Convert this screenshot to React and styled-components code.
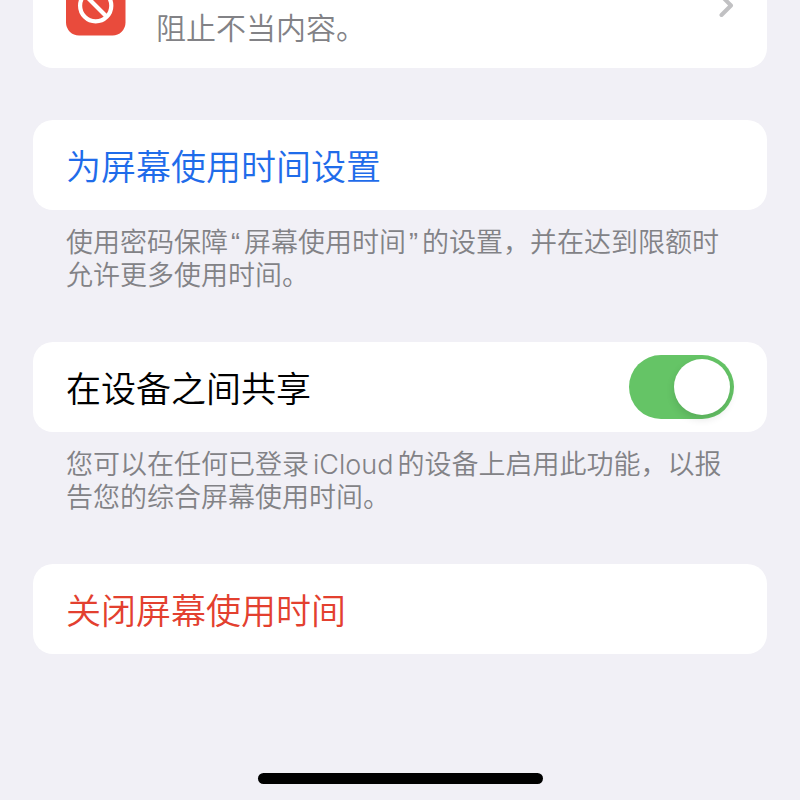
import React from "react";
import styled, { createGlobalStyle } from "styled-components";

const GlobalStyle = createGlobalStyle`
  * { box-sizing: border-box; }
  body {
    margin: 0;
    background: #f1f0f6;
    font-family: Inter, "Noto Sans CJK SC", sans-serif;
    font-weight: 350;
  }
`;

const Page = styled.main`
  display: flex;
  flex-direction: column;
  min-height: 100vh;
  padding: 0 33px;
  overflow: hidden;
`;

const Card = styled.section`
  display: flex;
  align-items: center;
  justify-content: space-between;
  min-height: 90px;
  padding: 0 33px;
  border-radius: 20px;
  background: #fff;
`;

const LinkCard = styled.a`
  display: flex;
  gap: 30px;
  height: 156px;
  margin: -88px 0 52px;
  padding: 64px 33px 0;
  border-radius: 20px;
  background: #fff;
  color: #828286;
  text-decoration: none;
`;

const AppIcon = styled.svg`
  flex: none;
  width: 60px;
  height: 60px;
`;

const LinkText = styled.span`
  flex: 1;
  margin-top: 32px;
  font-size: 30px;
  line-height: 40px;
`;

const Chevron = styled.svg`
  flex: none;
  width: 16px;
  height: 28px;
  margin-top: 16px;
`;

const Action = styled.button`
  flex: 1;
  padding: 3px 0 0;
  border: 0;
  background: none;
  color: ${({ $tone }) => ($tone === "danger" ? "#e3402f" : "#1f6cea")};
  font: inherit;
  font-size: 35px;
  line-height: 48px;
  text-align: left;
  cursor: pointer;
`;

const Label = styled.label`
  padding-top: 3px;
  color: #000;
  font-size: 35px;
  line-height: 48px;
`;

const Footnote = styled.p`
  margin: 16px 0 50px;
  padding: 0 33px;
  color: #828286;
  font-size: 27px;
  line-height: 33px;
`;

const Quote = styled.span`
  margin: 0 4px 0 3px;
  font-family: "Liberation Sans", sans-serif;
  line-height: 1;
`;

const Latin = styled.span`
  margin: 0 4px;
`;

const Switch = styled.input`
  appearance: none;
  display: flex;
  align-items: center;
  width: 105px;
  height: 64px;
  margin: 0;
  padding: 4px;
  border-radius: 32px;
  background: #e9e9eb;
  cursor: pointer;

  &::before {
    content: "";
    width: 56px;
    height: 56px;
    border-radius: 50%;
    background: #fff;
    box-shadow: 0 4px 8px rgba(0, 0, 0, 0.12);
  }

  &:checked {
    justify-content: flex-end;
    background: #65c466;
  }
`;

const HomeIndicator = styled.div`
  align-self: center;
  width: 285px;
  height: 11px;
  margin: auto 0 16px;
  border-radius: 6px;
  background: #000;
`;

export default function App() {
  return (
    <>
      <GlobalStyle />
      <Page>
        <LinkCard href="#content">
          <AppIcon viewBox="0 0 60 60" aria-hidden="true">
            <rect width="59.5" height="59.5" rx="13" fill="#e94b3c" />
            <g fill="none" stroke="#fff" strokeWidth="4.2">
              <circle cx="29.7" cy="29.7" r="15.6" />
              <path d="M18.7 18.7 40.7 40.7" />
            </g>
          </AppIcon>
          <LinkText>阻止不当内容。</LinkText>
          <Chevron viewBox="0 0 16 28" aria-hidden="true">
            <path
              d="M3.5 4 13 13.5 3.5 23"
              fill="none"
              stroke="#c1c1c3"
              strokeWidth="4"
              strokeLinecap="round"
              strokeLinejoin="round"
            />
          </Chevron>
        </LinkCard>

        <Card>
          <Action type="button">为屏幕使用时间设置</Action>
        </Card>
        <Footnote>
          使用密码保障<Quote>“</Quote>屏幕使用时间<Quote>”</Quote>的设置，并在达到限额时允许更多使用时间。
        </Footnote>

        <Card>
          <Label htmlFor="share">在设备之间共享</Label>
          <Switch id="share" type="checkbox" role="switch" defaultChecked />
        </Card>
        <Footnote>
          您可以在任何已登录<Latin>iCloud</Latin>的设备上启用此功能，以报告您的综合屏幕使用时间。
        </Footnote>

        <Card>
          <Action type="button" $tone="danger">关闭屏幕使用时间</Action>
        </Card>
        <HomeIndicator />
      </Page>
    </>
  );
}
